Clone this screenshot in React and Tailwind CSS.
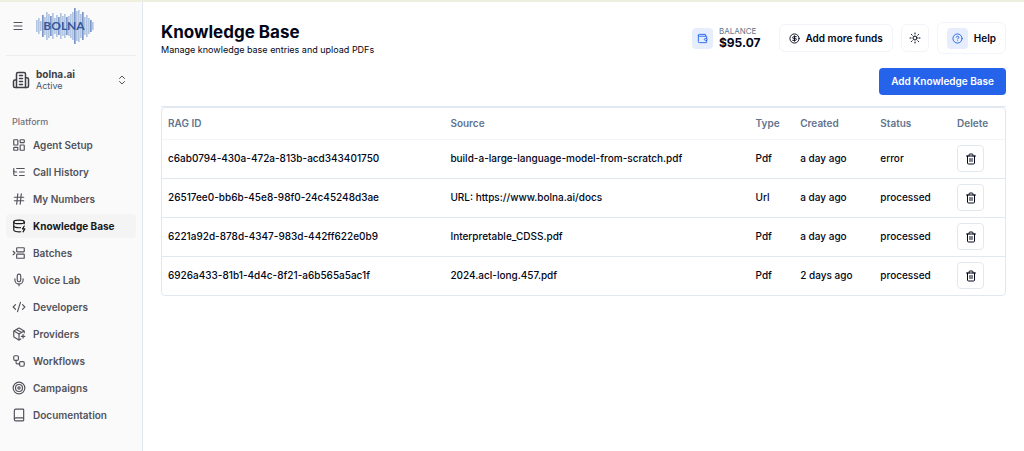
import {
  BetweenHorizontalStart,
  Book,
  ChevronsUpDown,
  CircleDollarSign,
  CircleQuestionMark,
  CodeXml,
  DatabaseZap,
  Hash,
  LayoutDashboard,
  Menu,
  Mic,
  PackagePlus,
  Sun,
  Target,
  Trash2,
  Wallet,
  Workflow,
} from 'lucide-react';

function StrokeIcon({ className, children }) {
  return (
    <svg
      viewBox="0 0 24 24"
      fill="none"
      stroke="currentColor"
      strokeWidth="2"
      strokeLinecap="round"
      strokeLinejoin="round"
      className={className}
      aria-hidden="true"
    >
      {children}
    </svg>
  );
}

function BuildingIcon({ className }) {
  return (
    <StrokeIcon className={className}>
      <path d="M6 22V4a2 2 0 0 1 2-2h8a2 2 0 0 1 2 2v18Z" />
      <path d="M6 12H4a2 2 0 0 0-2 2v6a2 2 0 0 0 2 2h2" />
      <path d="M18 9h2a2 2 0 0 1 2 2v9a2 2 0 0 1-2 2h-2" />
      <path d="M10 6h4M10 10h4M10 14h4M10 18h4" />
    </StrokeIcon>
  );
}

function TreeIcon({ className }) {
  return (
    <StrokeIcon className={className}>
      <path d="M21 12h-8M21 6H8M21 18h-8" />
      <path d="M3 6v4c0 1.1.9 2 2 2h3" />
      <path d="M3 10v6c0 1.1.9 2 2 2h3" />
    </StrokeIcon>
  );
}

const navItems = [
  { label: 'Agent Setup', icon: LayoutDashboard },
  { label: 'Call History', icon: TreeIcon },
  { label: 'My Numbers', icon: Hash },
  { label: 'Knowledge Base', icon: DatabaseZap, active: true },
  { label: 'Batches', icon: BetweenHorizontalStart },
  { label: 'Voice Lab', icon: Mic },
  { label: 'Developers', icon: CodeXml },
  { label: 'Providers', icon: PackagePlus },
  { label: 'Workflows', icon: Workflow },
  { label: 'Campaigns', icon: Target },
  { label: 'Documentation', icon: Book },
];

const entries = [
  {
    id: 'c6ab0794-430a-472a-813b-acd343401750',
    source: 'build-a-large-language-model-from-scratch.pdf',
    type: 'Pdf',
    created: 'a day ago',
    status: 'error',
  },
  {
    id: '26517ee0-bb6b-45e8-98f0-24c45248d3ae',
    source: 'URL: https://www.bolna.ai/docs',
    type: 'Url',
    created: 'a day ago',
    status: 'processed',
  },
  {
    id: '6221a92d-878d-4347-983d-442ff622e0b9',
    source: 'Interpretable_CDSS.pdf',
    type: 'Pdf',
    created: 'a day ago',
    status: 'processed',
  },
  {
    id: '6926a433-81b1-4d4c-8f21-a6b565a5ac1f',
    source: '2024.acl-long.457.pdf',
    type: 'Pdf',
    created: '2 days ago',
    status: 'processed',
  },
];

// Half-heights of the bars in the logo's wave form
const wave = [6, 8, 5, 11, 9, 14, 12, 10, 13, 8, 11, 9, 13, 10, 12, 9, 10, 12, 14, 18, 15, 16, 12, 14, 9, 11, 8, 6, 4];

function Logo() {
  return (
    <svg viewBox="0 0 58 36" className="h-9 w-[58px]" role="img" aria-label="Bolna">
      {wave.map((h, i) => (
        <rect
          key={i}
          x={i * 2}
          y={18 - h}
          width="1.7"
          height={h * 2}
          fill={i % 4 === 3 ? '#7a97c9' : '#b4c5e2'}
        />
      ))}
      <text
        x="28"
        y="22"
        textAnchor="middle"
        fontFamily="Lato, sans-serif"
        fontSize="12"
        fontWeight="700"
        fill="#34589c"
      >
        BOLNA
      </text>
    </svg>
  );
}

function Sidebar() {
  return (
    <aside className="w-[143px] shrink-0 bg-[#fafafa] border-r border-slate-200 px-1.5">
      <div className="h-[54px] pb-1.5 flex items-center gap-3 pl-1.5 border-b border-gray-200/70">
        <button type="button" aria-label="Toggle sidebar" className="text-zinc-600">
          <Menu className="w-3 h-3" />
        </button>
        <Logo />
      </div>

      <button type="button" className="w-full mt-1.5 h-9 flex items-center gap-1.5 pl-1.5 pr-2 text-left">
        <BuildingIcon className="w-[18px] h-[18px] text-zinc-700" />
        <span className="flex-1">
          <span className="block text-[10px] leading-3 font-bold text-zinc-700">bolna.ai</span>
          <span className="block text-[9px] leading-3 text-slate-600">Active</span>
        </span>
        <ChevronsUpDown className="w-3 h-3 text-zinc-600" />
      </button>

      <p className="mt-4 pl-1.5 text-[9px] leading-4 font-medium text-zinc-500">Platform</p>
      <nav className="mt-[3px] flex flex-col gap-[3px]">
        {navItems.map(({ label, icon: Icon, active }) => (
          <a
            key={label}
            href="#"
            aria-current={active ? 'page' : undefined}
            className={`h-6 flex items-center gap-[7px] px-1.5 rounded text-[10px] ${
              active ? 'bg-zinc-100 font-bold text-zinc-900' : 'font-semibold text-zinc-600'
            }`}
          >
            <Icon className="w-3.5 h-3.5 shrink-0" />
            {label}
          </a>
        ))}
      </nav>
    </aside>
  );
}

function Header() {
  return (
    <header className="flex items-start justify-between">
      <div>
        <h1 className="text-[17px] leading-5 font-bold">Knowledge Base</h1>
        <p className="text-[9px] leading-4">Manage knowledge base entries and upload PDFs</p>
      </div>
      <div className="flex items-center gap-2">
        <div className="flex items-center gap-1.5 mr-2.5">
          <span className="w-[21px] h-[21px] rounded bg-[#e6edfd] text-[#2563eb] flex items-center justify-center">
            <Wallet className="w-[11px] h-[11px]" />
          </span>
          <div>
            <p className="text-[8px] leading-[10px] text-slate-500">BALANCE</p>
            <p className="text-xs leading-[14px] font-bold">$95.07</p>
          </div>
        </div>
        <button
          type="button"
          className="h-7 px-[9px] flex items-center gap-1.5 rounded-md border border-slate-100 text-[10px] font-semibold"
        >
          <CircleDollarSign className="w-[11px] h-[11px]" /> Add more funds
        </button>
        <button
          type="button"
          aria-label="Toggle theme"
          className="w-7 h-7 flex items-center justify-center rounded-md border border-slate-100"
        >
          <Sun className="w-3 h-3" />
        </button>
        <button
          type="button"
          className="h-8 px-[9px] flex items-center gap-1.5 rounded-md border border-slate-100 text-[10px] font-semibold"
        >
          <span className="w-[21px] h-[21px] rounded bg-[#e6edfd] text-[#2563eb] flex items-center justify-center">
            <CircleQuestionMark className="w-[11px] h-[11px]" />
          </span>
          Help
        </button>
      </div>
    </header>
  );
}

function EntriesTable() {
  return (
    <div className="mt-[11px] border-t border-slate-200">
      <div className="rounded border border-slate-200 overflow-hidden">
        <table className="w-full table-fixed text-[10px] font-medium text-left">
          <thead>
            <tr className="h-[31px] border-b border-slate-100 text-slate-500">
              <th className="w-[33.5%] px-1.5 font-semibold">RAG ID</th>
              <th className="w-[36.2%] px-1.5 font-semibold">Source</th>
              <th className="w-[5.3%] px-1.5 font-semibold">Type</th>
              <th className="w-[9.5%] px-1.5 font-semibold">Created</th>
              <th className="w-[9.1%] px-1.5 font-semibold">Status</th>
              <th className="w-[6.4%] px-1.5 font-semibold">Delete</th>
            </tr>
          </thead>
          <tbody>
            {entries.map((entry) => (
              <tr key={entry.id} className="h-[39px] border-b border-slate-200 last:border-b-0">
                <td className="px-1.5">{entry.id}</td>
                <td className="px-1.5">{entry.source}</td>
                <td className="px-1.5">{entry.type}</td>
                <td className="px-1.5">{entry.created}</td>
                <td className="px-1.5">{entry.status}</td>
                <td className="px-1.5">
                  <button
                    type="button"
                    aria-label={`Delete ${entry.source}`}
                    className="w-[27px] h-[27px] flex items-center justify-center rounded border border-slate-200"
                  >
                    <Trash2 className="w-3 h-3" />
                  </button>
                </td>
              </tr>
            ))}
          </tbody>
        </table>
      </div>
    </div>
  );
}

export default function App() {
  return (
    <div className="min-h-screen flex flex-col bg-white border-t-2 border-[#eeefdf] font-['Inter',sans-serif] text-slate-950">
      <div className="flex-1 flex">
        <Sidebar />
        <main className="flex-1 min-w-0 pt-5 px-[18px]">
          <Header />
          <div className="mt-2.5 flex justify-end">
            <button
              type="button"
              className="h-[27px] px-3 rounded bg-[#2563eb] text-white text-[10px] font-semibold"
            >
              Add Knowledge Base
            </button>
          </div>
          <EntriesTable />
        </main>
      </div>
    </div>
  );
}
